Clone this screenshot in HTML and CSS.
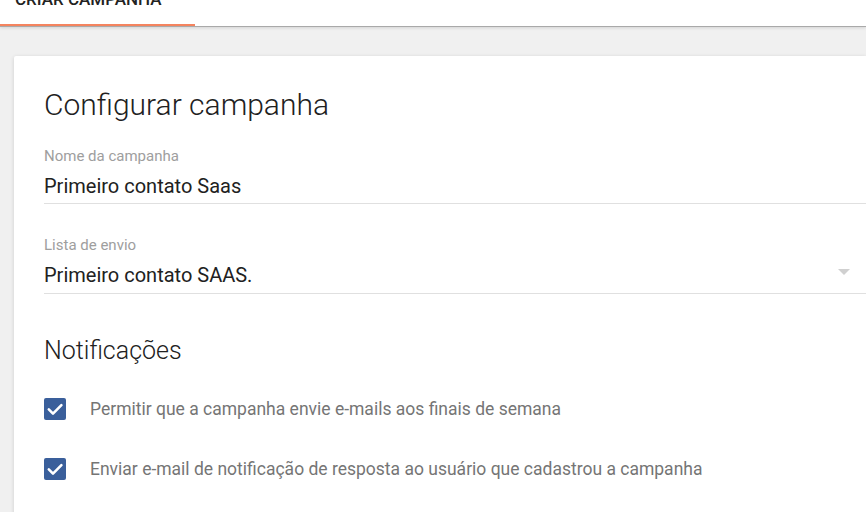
FILE: index.html
```html
<!DOCTYPE html>
<html lang="pt-BR">
<head>
<meta charset="utf-8">
<title>Criar campanha</title>
<link rel="stylesheet" href="styles.css">
</head>
<body>
<header class="tabs">
  <div class="tab active"><span class="tab-label">Criar campanha</span></div>
</header>
<main class="content">
  <section class="card">
    <h1 class="title">Configurar campanha</h1>
    <div class="field">
      <label class="field-label">Nome da campanha</label>
      <div class="field-value">Primeiro contato Saas</div>
    </div>
    <div class="field select">
      <label class="field-label">Lista de envio</label>
      <div class="field-value">Primeiro contato SAAS.</div>
      <span class="caret"></span>
    </div>
    <h2 class="subtitle">Notificações</h2>
    <div class="check-row">
      <span class="checkbox"><svg viewBox="0 0 22 22" width="22" height="22"><path d="M4.8 11.4 L9 15.6 L17.4 7.2" fill="none" stroke="#fff" stroke-width="2.6" stroke-linecap="round" stroke-linejoin="round"/></svg></span>
      <span class="check-text">Permitir que a campanha envie e-mails aos finais de semana</span>
    </div>
    <div class="check-row">
      <span class="checkbox"><svg viewBox="0 0 22 22" width="22" height="22"><path d="M4.8 11.4 L9 15.6 L17.4 7.2" fill="none" stroke="#fff" stroke-width="2.6" stroke-linecap="round" stroke-linejoin="round"/></svg></span>
      <span class="check-text">Enviar e-mail de notificação de resposta ao usuário que cadastrou a campanha</span>
    </div>
  </section>
</main>
</body>
</html>
```
FILE: styles.css
```css
* { box-sizing: border-box; }
html, body { margin: 0; padding: 0; }
body {
  font-family: Roboto, "Noto Sans", sans-serif;
  background: #f0f0f0;
  width: 866px;
  height: 512px;
  overflow: hidden;
}
.tabs {
  height: 27px;
  background: #fff;
  border-bottom: 1px solid #a9a9a9;
  box-shadow: 0 1px 3px rgba(0,0,0,0.12);
  display: flex;
  overflow: hidden;
  position: relative;
  z-index: 1;
}
.tab {
  width: 195px;
  height: 27px;
  border-bottom: 3px solid #f4845f;
  display: flex;
  align-items: flex-end;
  padding-left: 15px;
}
.tab-label {
  font-size: 17px;
  font-weight: 500;
  color: #222;
  text-transform: uppercase;
  line-height: 17px;
  margin-bottom: 16px;
}
.content {
  padding: 29px 0 0 14px;
}
.card {
  background: #fff;
  border-radius: 2px 0 0 0;
  box-shadow: 0 1px 4px rgba(0,0,0,0.14);
  padding: 29px 0 40px 30px;
  height: 480px;
}
.title {
  margin: 0;
  font-size: 30px;
  font-weight: 300;
  color: #212121;
  line-height: 40px;
}
.field {
  margin-top: 21px;
  border-bottom: 1px solid #e0e0e0;
  position: relative;
  padding-bottom: 5px;
}
.field + .field { margin-top: 31px; padding-bottom: 6px; }
.field-label {
  display: block;
  font-size: 15px;
  color: #9e9e9e;
  line-height: 20px;
}
.field-value {
  font-size: 20px;
  color: #212121;
  line-height: 24px;
  margin-top: 8px;
}
.caret {
  position: absolute;
  right: 16px;
  top: 34px;
  width: 0;
  height: 0;
  border-left: 6px solid transparent;
  border-right: 6px solid transparent;
  border-top: 6px solid #d0d0d0;
}
.subtitle {
  margin: 42px 0 0;
  font-size: 25px;
  font-weight: 300;
  color: #212121;
  line-height: 30px;
}
.check-row {
  display: flex;
  align-items: center;
  gap: 24px;
  margin-top: 32px;
}
.check-row + .check-row { margin-top: 38px; }
.checkbox {
  width: 22px;
  height: 22px;
  background: #3a5f9b;
  border-radius: 2px;
  display: flex;
  flex: none;
}
.check-text {
  font-size: 17.5px;
  color: #757575;
  line-height: 22px;
}
```
